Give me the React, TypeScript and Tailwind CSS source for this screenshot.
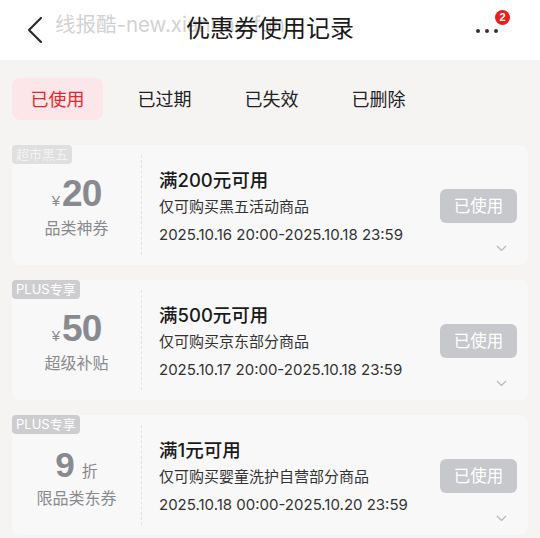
import React from "react";

type Coupon = {
  tag: string;
  tagClass: string;
  amount: string;
  kind: "yuan" | "zhe";
  label: string;
  title: string;
  desc: string;
  date: string;
};

const coupons: Coupon[] = [
  {
    tag: "超市黑五",
    tagClass: "bg-[#dfdfe0] text-[#f3f3f3]",
    amount: "20",
    kind: "yuan",
    label: "品类神券",
    title: "满200元可用",
    desc: "仅可购买黑五活动商品",
    date: "2025.10.16 20:00-2025.10.18 23:59",
  },
  {
    tag: "PLUS专享",
    tagClass: "bg-[#cdcdcf] text-white",
    amount: "50",
    kind: "yuan",
    label: "超级补贴",
    title: "满500元可用",
    desc: "仅可购买京东部分商品",
    date: "2025.10.17 20:00-2025.10.18 23:59",
  },
  {
    tag: "PLUS专享",
    tagClass: "bg-[#cdcdcf] text-white",
    amount: "9",
    kind: "zhe",
    label: "限品类东券",
    title: "满1元可用",
    desc: "仅可购买婴童洗护自营部分商品",
    date: "2025.10.18 00:00-2025.10.20 23:59",
  },
];

const tabs = ["已使用", "已过期", "已失效", "已删除"];

function CouponCard({ c }: { c: Coupon }) {
  return (
    <div className="relative flex h-[120px] rounded-lg bg-[#f8f8f8]">
      <div
        className={`absolute left-0 top-0 flex h-[19px] items-center rounded-[4px] px-[4px] text-[13px] leading-none ${c.tagClass}`}
      >
        {c.tag}
      </div>
      <div className="flex w-[129px] flex-col items-center justify-center pt-[6px] text-[#898a8f]">
        {c.kind === "yuan" ? (
          <div className="flex items-baseline font-['Liberation_Sans',sans-serif]">
            <span className="mr-[2px] text-[15px]">¥</span>
            <span className="text-[37px] font-bold leading-[36px] tracking-[-1px]">{c.amount}</span>
          </div>
        ) : (
          <div className="flex items-baseline">
            <span className="font-['Liberation_Sans',sans-serif] text-[35px] font-bold leading-[36px]">
              {c.amount}
            </span>
            <span className="ml-[7px] text-[16px]">折</span>
          </div>
        )}
        <div className="mt-[3px] text-[16px] leading-[24px]">{c.label}</div>
      </div>
      <div className="my-[10px] border-l border-dashed border-[#e2e2e2]" />
      <div className="flex flex-1 flex-col pl-[17px] pt-[22px]">
        <div className="text-[18.5px] font-medium leading-[26px] text-[#1a1a1a]">{c.title}</div>
        <div className="mt-[3px] text-[15px] leading-[22px] text-[#333]">{c.desc}</div>
        <div className="mt-[6px] text-[15px] leading-[22px] text-[#333]">{c.date}</div>
      </div>
      <div className="flex flex-col items-end pr-[11px] pt-[44px]">
        <div className="flex h-[34px] w-[77px] items-center justify-center rounded-[6px] bg-[#c6c8cc] text-[16.5px] text-white">
          已使用
        </div>
        <svg className="mr-[10px] mt-[22px]" width="11" height="7" viewBox="0 0 11 7" fill="none">
          <path d="M1 1l4.5 4.5L10 1" stroke="#b5b5b8" strokeWidth="1.2" />
        </svg>
      </div>
    </div>
  );
}

export default function App() {
  return (
    <div className="h-[538px] w-[540px] overflow-hidden bg-[#f6f4f2] font-['Inter','Noto_Sans_CJK_SC',sans-serif]">
      <div className="relative flex h-[60px] items-center bg-white px-[26px]">
        <svg width="18" height="28" viewBox="0 0 18 28" fill="none">
          <path d="M15 2L3 14l12 12" stroke="#2b2b2b" strokeWidth="2.2" strokeLinecap="round" strokeLinejoin="round" />
        </svg>
        <div className="pointer-events-none absolute left-[55px] top-[10px] whitespace-nowrap text-[20.5px] text-[#d2d2d2]">
          线报酷-new.xianbao.fun
        </div>
        <div className="absolute left-1/2 top-[13px] -translate-x-1/2 whitespace-nowrap text-[24px] leading-[32px] text-[#1a1a1a]">
          优惠券使用记录
        </div>
        <div className="ml-auto mr-[16px] flex items-center gap-[5px] pt-[2px]">
          <span className="h-[4px] w-[4px] rounded-full bg-[#333]" />
          <span className="h-[4px] w-[4px] rounded-full bg-[#333]" />
          <span className="h-[4px] w-[4px] rounded-full bg-[#333]" />
        </div>
        <div className="absolute left-[495px] top-[10px] flex h-[15px] w-[15px] items-center justify-center rounded-full bg-[#e5201c] font-['Liberation_Sans',sans-serif] text-[11px] font-bold text-white">
          2
        </div>
      </div>

      <div className="flex gap-[16px] px-[12px] pt-[18px]">
        {tabs.map((t, i) => (
          <div
            key={t}
            className={`flex h-[42px] w-[91px] items-center justify-center rounded-lg text-[18px] ${
              i === 0 ? "bg-[#fbe7e9] text-[#e4262c]" : "text-[#222]"
            }`}
          >
            {t}
          </div>
        ))}
      </div>

      <div className="flex flex-col gap-[15px] px-[12px] pt-[25px]">
        {coupons.map((c, i) => (
          <CouponCard key={i} c={c} />
        ))}
      </div>
    </div>
  );
}
